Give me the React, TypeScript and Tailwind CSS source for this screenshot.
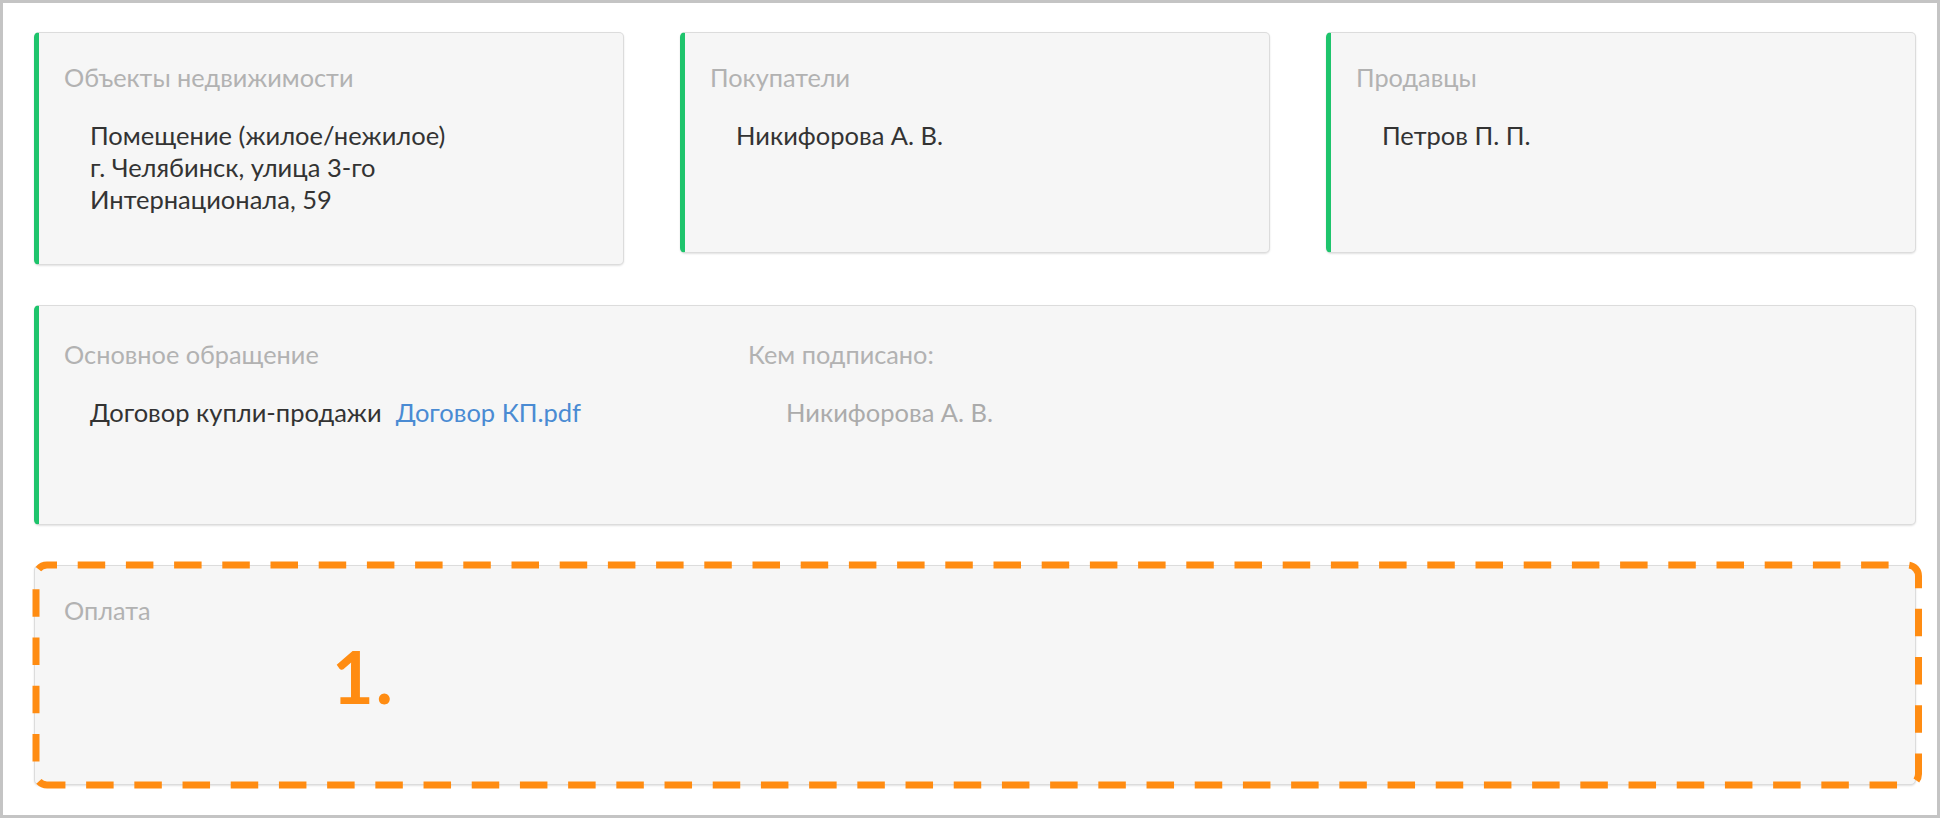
import React from "react";

// Карточки сделки
const topCards = [
  {
    title: "Объекты недвижимости",
    lines: ["Помещение (жилое/нежилое)", "г. Челябинск, улица 3-го", "Интернационала, 59"],
  },
  {title: "Покупатели", lines: ["Никифорова А. В."]},
  {title: "Продавцы", lines: ["Петров П. П."]},
];

const cardBase =
  "rounded-[5px] border border-[#dcdcdc] bg-[#f6f6f6] shadow-[0_1px_2px_rgba(0,0,0,0.12)]";

function Title({children}: {children: React.ReactNode}) {
  return <div className="text-[25.3px] leading-[32px] text-[#b2b2b2]">{children}</div>;
}

export default function App() {
  return (
    <div className="font-['Lato',sans-serif] bg-white">
      <div className="w-[1940px] h-[818px] border-[3px] border-[#c4c4c4] pl-[31px] pr-[21px] pt-[29px] flex flex-col gap-[40px]">
        {/* Верхний ряд */}
        <div className="grid grid-cols-3 gap-x-[56px] items-start">
          {topCards.map((card) => (
            <div
              key={card.title}
              className={`${cardBase} border-l-[5px] border-l-[#1ec46c] min-h-[221px] pl-[25px] pr-6 pt-[28px] pb-[49px]`}
            >
              <Title>{card.title}</Title>
              <div className="mt-[26px] pl-[26px] text-[25.5px] leading-[32px] text-[#333]">
                {card.lines.map((l) => (
                  <div key={l}>{l}</div>
                ))}
              </div>
            </div>
          ))}
        </div>

        {/* Основное обращение */}
        <div className={`${cardBase} border-l-[5px] border-l-[#1ec46c] h-[220px] pl-[25px] pt-[32px] flex`}>
          <div className="w-[684px]">
            <Title>Основное обращение</Title>
            <div className="mt-[26px] pl-[26px] text-[25.5px] leading-[32px] text-[#333] flex">
              <span>Договор купли-продажи</span>
              <a href="#" className="ml-[14px] text-[#4a8bd3]">
                Договор КП.pdf
              </a>
            </div>
          </div>
          <div>
            <Title>Кем подписано:</Title>
            <div className="mt-[26px] pl-[38px] text-[25.5px] leading-[32px] text-[#ababab]">
              Никифорова А. В.
            </div>
          </div>
        </div>

        {/* Оплата — с пометкой поверх */}
        <div className={`${cardBase} relative h-[220px] pl-[29px] pt-[28px]`}>
          <Title>Оплата</Title>
          <span className="absolute left-[297px] top-[74px] text-[72px] leading-[72px] font-bold tracking-[2px] text-[#ff8c12]">
            1.
          </span>
          <svg
            className="absolute -left-px -top-px overflow-visible pointer-events-none"
            width={1882}
            height={220}
          >
            <rect
              x={2}
              y={0}
              width={1882.5}
              height={220}
              rx={11}
              fill="none"
              stroke="#ff8c12"
              strokeWidth={7}
              strokeDasharray="27.5 20.7"
              strokeDashoffset={17.5}
            />
          </svg>
        </div>
      </div>
    </div>
  );
}
